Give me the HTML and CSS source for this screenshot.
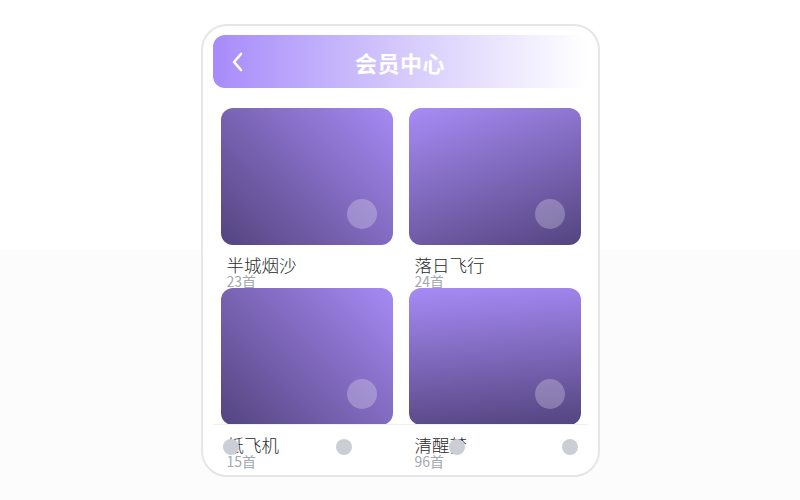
FILE: index.html
```html
<!DOCTYPE html>
<html lang="zh-CN">
<head>
    <meta charset="UTF-8">
    <meta name="viewport" content="width=device-width, initial-scale=1.0">
    <title>会员中心</title>
    <link rel="stylesheet" href="styles.css">
</head>
<body>
    <div class="phone">
        <!-- Header -->
        <div class="header">
            <svg class="back" width="14" height="20" viewBox="0 0 14 20">
                <path d="M10 2 L3 10 L10 18" fill="none" stroke="#fff" stroke-width="2.6" stroke-linecap="round" stroke-linejoin="round"/>
            </svg>
            <h2>会员中心</h2>
        </div>

        <!-- Playlist grid -->
        <div class="grid">
            <div class="item">
                <div class="cover cover-a"><span class="play"></span></div>
                <div class="info">
                    <div class="name">半城烟沙</div>
                    <div class="count">23首</div>
                </div>
            </div>
            <div class="item">
                <div class="cover cover-b"><span class="play"></span></div>
                <div class="info">
                    <div class="name">落日飞行</div>
                    <div class="count">24首</div>
                </div>
            </div>
            <div class="item">
                <div class="cover cover-a"><span class="play"></span></div>
                <div class="info">
                    <div class="name">纸飞机</div>
                    <div class="count">15首</div>
                </div>
            </div>
            <div class="item">
                <div class="cover cover-c"><span class="play"></span></div>
                <div class="info">
                    <div class="name">清醒梦</div>
                    <div class="count">96首</div>
                </div>
            </div>
        </div>

        <!-- Tab bar -->
        <div class="tabbar">
            <span class="dot"></span>
            <span class="dot"></span>
            <span class="dot"></span>
            <span class="dot"></span>
        </div>
    </div>
</body>
</html>
```

FILE: styles.css
```css
* {
    box-sizing: border-box;
}
body {
    margin: 0;
    padding-top: 24px;
    min-height: 500px;
    font-family: "Noto Sans CJK SC", "Noto Sans", sans-serif;
    background: linear-gradient(to bottom, #fff 50%, #fcfcfc 50%);
}
.phone {
    position: relative;
    width: 399px;
    height: 453px;
    margin: 0 auto;
    padding: 9px 10px 0;
    background: #fff;
    border: 2px solid #e6e6ea;
    border-radius: 26px;
    overflow: hidden;
}
.header {
    position: relative;
    display: flex;
    align-items: center;
    justify-content: center;
    height: 53px;
    border-radius: 12px;
    background: linear-gradient(to right, #a78bfa, #d9cffc 55%, #fff);
}
.header h2 {
    margin: 0;
    color: #fff;
    font-size: 22px;
    font-weight: 700;
    letter-spacing: 0.5px;
}
.back {
    position: absolute;
    left: 18px;
    top: 17px;
}
.grid {
    display: grid;
    grid-template-columns: 1fr 1fr;
    column-gap: 16px;
    padding: 20px 7px 0 8px;
}
.item {
    height: 180px;
}
.cover {
    position: relative;
    height: 137px;
    border-radius: 12px;
}
.cover-a {
    background: linear-gradient(45deg, #54447f, #a68af4);
}
.cover-b {
    background: linear-gradient(160deg, #a78cf6, #54447f);
}
.cover-c {
    background: linear-gradient(175deg, #a68bf6, #54447f);
}
.play {
    position: absolute;
    right: 16px;
    bottom: 16px;
    width: 30px;
    height: 30px;
    border-radius: 50%;
    background: rgba(255, 255, 255, 0.25);
}
.info {
    padding: 9px 6px 0;
}
.name {
    font-size: 17.5px;
    font-weight: 300;
    line-height: 21px;
    color: #2a2a2a;
}
.count {
    font-size: 14px;
    line-height: 12px;
    color: #a3a7ae;
}
.tabbar {
    position: absolute;
    left: 10px;
    right: 10px;
    bottom: 0;
    height: 51px;
    display: flex;
    justify-content: space-between;
    padding: 14px 10px 0;
    border-top: 1px solid #f0f0f2;
}
.dot {
    width: 16px;
    height: 16px;
    border-radius: 50%;
    background: #cbcfd5;
}
```
